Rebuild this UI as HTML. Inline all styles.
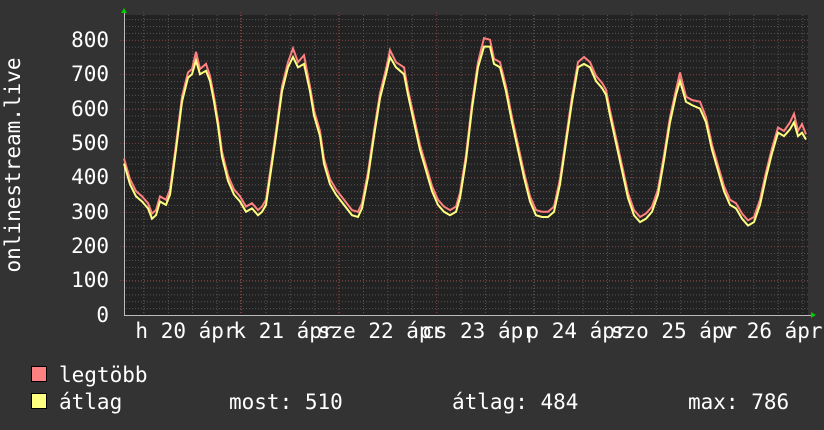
<!DOCTYPE html>
<html><head><meta charset="utf-8"><style>
html,body{margin:0;padding:0;background:#333;}
svg{display:block}
text{font-family:"DejaVu Sans Mono","Liberation Mono",monospace;font-size:21px;fill:#fff}
</style></head><body>
<svg width="824" height="430" viewBox="0 0 824 430">
<defs>
<pattern id="vg" x="119" y="0" width="24.4" height="430" patternUnits="userSpaceOnUse">
<line x1="0.5" y1="0" x2="0.5" y2="430" stroke="#555" stroke-dasharray="1,2"/>
</pattern>
<pattern id="hg" x="0" y="315" width="824" height="6.88" patternUnits="userSpaceOnUse">
<line x1="0" y1="0.5" x2="824" y2="0.5" stroke="#555" stroke-dasharray="1,2"/>
</pattern>
</defs>
<rect x="124" y="15" width="684" height="300" fill="#222"/>
<rect x="124" y="15" width="684" height="300" fill="url(#hg)"/>
<rect x="124" y="15" width="684" height="300" fill="url(#vg)"/>
<g stroke="#7a3a3a" stroke-dasharray="1,2">
<line x1="120" y1="40.5" x2="808" y2="40.5"/><line x1="120" y1="74.5" x2="808" y2="74.5"/>
<line x1="120" y1="109.5" x2="808" y2="109.5"/><line x1="120" y1="143.5" x2="808" y2="143.5"/>
<line x1="120" y1="177.5" x2="808" y2="177.5"/><line x1="120" y1="212.5" x2="808" y2="212.5"/>
<line x1="120" y1="246.5" x2="808" y2="246.5"/><line x1="120" y1="280.5" x2="808" y2="280.5"/>
<line x1="143.5" y1="12" x2="143.5" y2="318"/><line x1="240.5" y1="12" x2="240.5" y2="318"/>
<line x1="338.5" y1="12" x2="338.5" y2="318"/><line x1="436.5" y1="12" x2="436.5" y2="318"/>
<line x1="533.5" y1="12" x2="533.5" y2="318"/><line x1="631.5" y1="12" x2="631.5" y2="318"/>
<line x1="729.5" y1="12" x2="729.5" y2="318"/>
</g>
<line x1="124" y1="315.5" x2="812" y2="315.5" stroke="#bbb"/>
<line x1="124.5" y1="12" x2="124.5" y2="315" stroke="#bbb"/>
<polygon points="121,13 127,13 124,8" fill="#0c0"/>
<polygon points="811,312 811,318 816,315" fill="#0c0"/>
<g transform="translate(0,315) scale(1,-0.344)" fill="none">
<polyline transform="translate(0,15)" stroke="#ff8080" stroke-width="2" vector-effect="non-scaling-stroke" points="124,440 130,380 136,345 142,330 148,310 152,280 156,290 160,330 166,320 170,350 176,480 182,620 188,690 192,700 196,750 200,700 206,715 210,680 214,620 218,550 222,460 228,390 234,350 240,330 246,300 252,310 258,290 262,300 266,320 270,400 276,520 282,650 288,720 293,760 298,720 304,740 310,650 314,580 320,520 324,440 330,380 336,350 344,320 352,290 358,285 362,310 368,400 374,520 380,630 386,700 390,755 396,720 404,705 408,640 414,560 420,480 426,420 432,360 438,320 444,300 450,290 456,300 460,340 466,450 472,600 478,720 484,790 490,785 494,730 500,720 506,650 512,560 518,480 524,400 530,330 536,290 542,285 548,285 554,300 560,380 566,500 572,620 578,720 584,735 590,720 596,680 602,660 606,640 610,580 616,500 622,420 628,340 634,290 640,270 646,280 652,300 658,350 664,450 670,560 676,640 680,690 686,620 692,610 700,605 706,560 712,480 718,420 724,360 730,320 736,310 742,280 748,260 754,270 760,320 766,400 772,470 778,530 784,520 790,545 794,570 798,520 802,540 806,510"/>
<polyline stroke="#ffff80" stroke-width="2" vector-effect="non-scaling-stroke" points="124,440 130,380 136,345 142,330 148,310 152,280 156,290 160,330 166,320 170,350 176,480 182,620 188,690 192,700 196,740 200,700 206,710 210,680 214,620 218,550 222,460 228,390 234,350 240,330 246,300 252,310 258,290 262,300 266,320 270,400 276,520 282,650 288,720 293,750 298,720 304,730 310,650 314,580 320,520 324,440 330,380 336,350 344,320 352,290 358,285 362,310 368,400 374,520 380,630 386,700 390,750 396,720 404,700 408,640 414,560 420,480 426,420 432,360 438,320 444,300 450,290 456,300 460,340 466,450 472,600 478,720 484,780 490,780 494,730 500,720 506,650 512,560 518,480 524,400 530,330 536,290 542,285 548,285 554,300 560,380 566,500 572,620 578,720 584,730 590,720 596,680 602,660 606,640 610,580 616,500 622,420 628,340 634,290 640,270 646,280 652,300 658,350 664,450 670,560 676,640 680,680 686,620 692,610 700,600 706,560 712,480 718,420 724,360 730,320 736,310 742,280 748,260 754,270 760,320 766,400 772,470 778,530 784,520 790,540 794,560 798,520 802,530 806,510"/>
</g>
<g text-anchor="end">
<text x="109" y="47">800</text><text x="109" y="81">700</text><text x="109" y="116">600</text>
<text x="109" y="150">500</text><text x="109" y="184">400</text><text x="109" y="219">300</text>
<text x="109" y="253">200</text><text x="109" y="287">100</text><text x="109" y="322">0</text>
</g>
<text transform="translate(20,165) rotate(-90)" text-anchor="middle">onlinestream.live</text>
<g text-anchor="middle" xml:space="preserve">
<text x="186" y="338">h 20 ápr</text>
<text x="284" y="338">k 21 ápr</text>
<text x="381" y="338">sze 22 ápr</text>
<text x="479" y="338">cs 23 ápr</text>
<text x="577" y="338">p 24 ápr</text>
<text x="674" y="338">szo 25 ápr</text>
<text x="772" y="338">v 26 ápr</text>
</g>
<rect x="31.5" y="366.5" width="15" height="15" fill="#ff8080" stroke="#000"/>
<rect x="31.5" y="393.5" width="15" height="15" fill="#ffff80" stroke="#000"/>
<text x="59" y="382">legtöbb</text>
<text x="59" y="409">átlag</text>
<text x="229" y="409">most: 510</text>
<text x="452" y="409">átlag: 484</text>
<text x="688" y="409">max: 786</text>
</svg>
</body></html>
